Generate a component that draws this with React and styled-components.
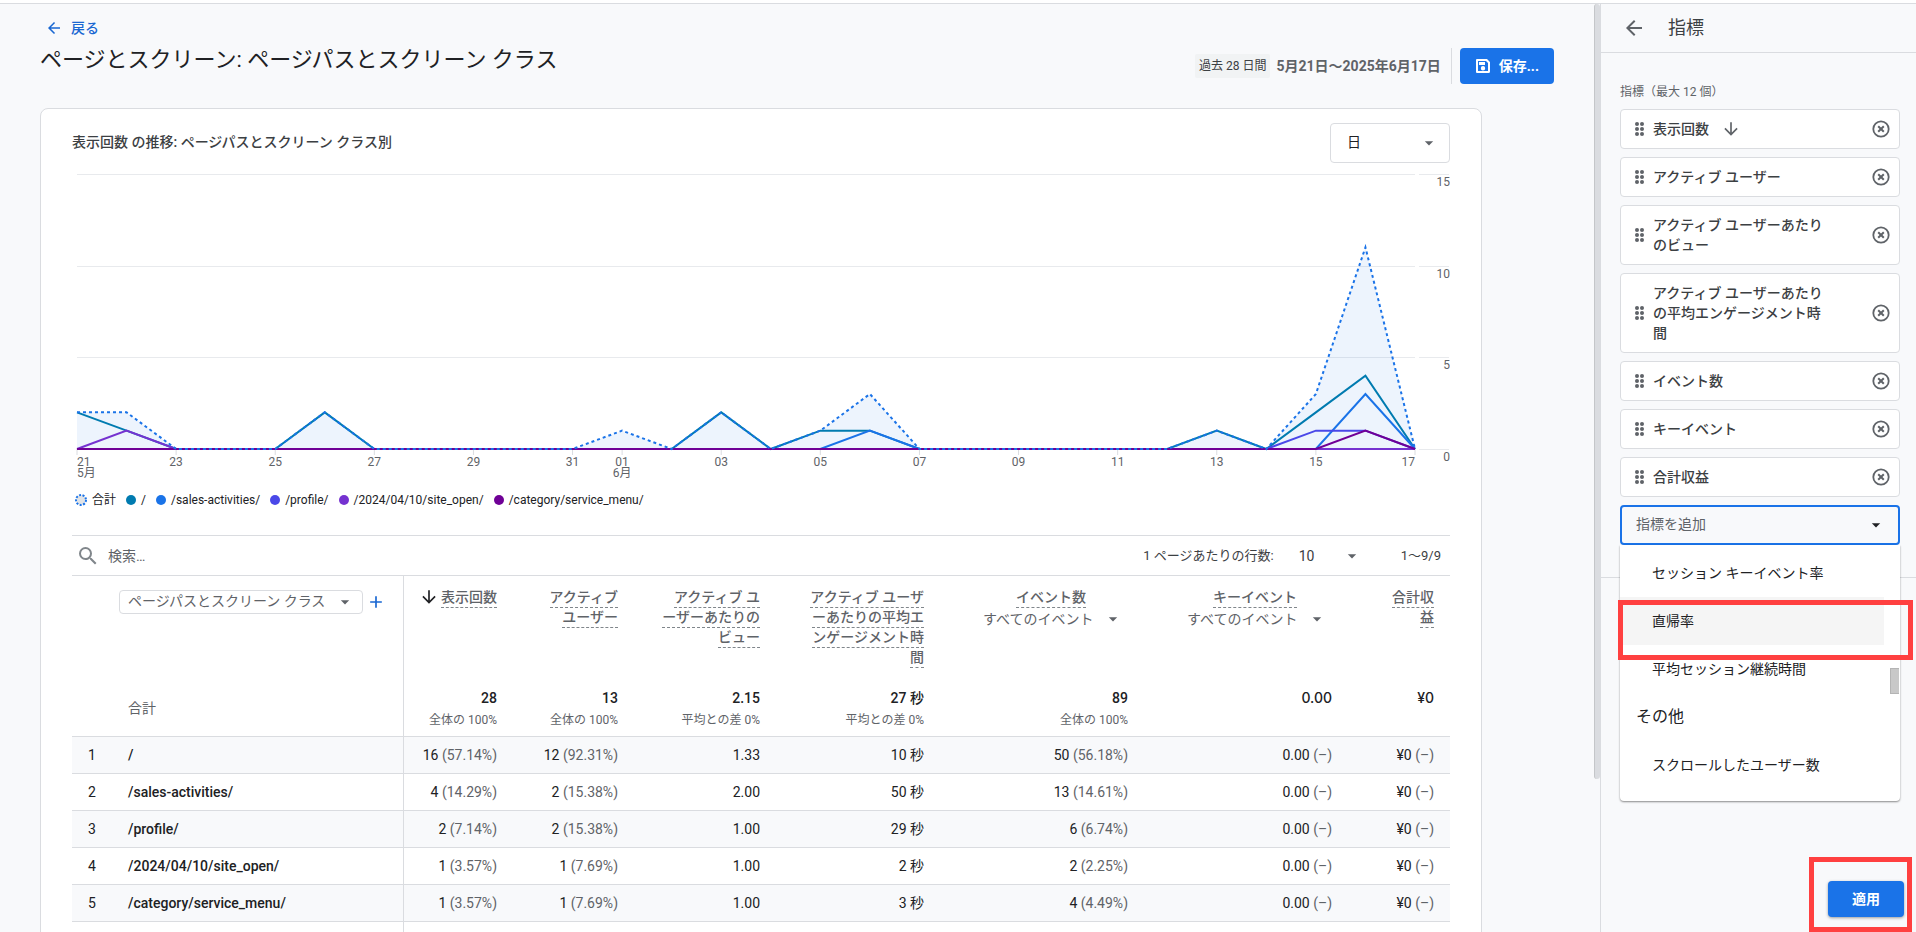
import styled, { createGlobalStyle } from 'styled-components';
import { useState } from 'react';
import { MdArrowBack, MdArrowDownward, MdAdd, MdSearch, MdArrowDropDown } from 'react-icons/md';

const GlobalStyle = createGlobalStyle`
  * {
    box-sizing: border-box;
  }

  body {
    margin: 0;
    color: #202124;
    background: #f8f9fb;
    font-family: Roboto, 'Noto Sans CJK JP', sans-serif;
    font-size: 14px;
    line-height: 20px;
  }

  button, input, select {
    font: inherit;
    color: inherit;
    margin: 0;
  }

  button {
    cursor: pointer;
  }
`;

const Shell = styled.div`
  height: 100vh;
  overflow: hidden;
  padding-top: 3px;
  background: #fff;
`;

const Page = styled.div`
  display: flex;
  height: 100%;
  border-top: 1px solid #dadce0;
  background: #f8f9fb;
`;

const Main = styled.main`
  flex: 1;
  min-width: 0;
  padding: 14px 40px 0;
  overflow: hidden;
`;

const ScrollTrack = styled.div`
  width: 6px;
  flex: none;
`;

const ScrollThumb = styled.div`
  height: 83.5%;
  border-radius: 4px;
  border-left: 1px solid #c4c6c9;
  background: #dadce0;
`;

const BackLink = styled.a`
  display: flex;
  align-items: center;
  gap: 8px;
  width: fit-content;
  margin-left: 5px;
  color: #1967d2;
  font-weight: 500;
  text-decoration: none;
`;

const HeaderRow = styled.header`
  display: flex;
  align-items: center;
  justify-content: space-between;
  height: 50px;
  margin-bottom: 20px;
`;

const PageTitle = styled.h1`
  margin: 0 0 6px;
  font-size: 22px;
  line-height: 28px;
  font-weight: 400;
`;

const HeaderActions = styled.div`
  display: flex;
  align-items: center;
  padding-top: 6px;
`;

const RangeChip = styled.span`
  padding: 2px 4px;
  margin-right: 6px;
  border-radius: 2px;
  background: #f1f3f4;
  color: #3c4043;
  font-size: 12px;
`;

const DateRange = styled.span`
  color: #5f6368;
  font-weight: 700;
`;

const Divider = styled.span`
  width: 1px;
  height: 36px;
  margin: 0 8px 0 10px;
  background: #dadce0;
`;

const PrimaryButton = styled.button`
  display: flex;
  align-items: center;
  justify-content: center;
  gap: 8px;
  height: 36px;
  min-width: 76px;
  padding: 0 15px;
  border: none;
  border-radius: 4px;
  background: #1a73e8;
  color: #fff;
  font-weight: 700;
  box-shadow: ${(p) => (p.$raised ? '0 1px 3px rgba(60, 64, 67, 0.5)' : 'none')};
`;

const Card = styled.section`
  margin-right: 72px;
  padding: 14px 31px 0;
  border: 1px solid #dadce0;
  border-radius: 8px 8px 0 0;
  background: #fff;
`;

const CardHeader = styled.div`
  display: flex;
  justify-content: space-between;
  height: 40px;
`;

const CardTitle = styled.h2`
  margin: 9px 0 0;
  color: #3c4043;
  font-size: 14px;
  line-height: 20px;
  font-weight: 500;
`;

const SelectWrap = styled.span`
  display: inline-flex;
  align-items: center;
  position: relative;

  svg {
    position: absolute;
    right: ${(p) => p.$caret}px;
    color: #5f6368;
    pointer-events: none;
  }
`;

const BareSelect = styled.select`
  appearance: none;
  border: none;
  background: transparent;
  outline: none;
  padding: 0;
  cursor: pointer;
`;

const PeriodSelect = styled(BareSelect)`
  width: 120px;
  height: 40px;
  padding: 0 16px 2px;
  border: 1px solid #dadce0;
  border-radius: 4px;
`;

const ChartSvg = styled.svg`
  display: block;
  width: 100%;
  height: auto;
  font-size: 12px;
`;

const Legend = styled.ul`
  display: flex;
  gap: 10px;
  margin: 5px 0 0;
  padding: 0 0 0 3px;
  list-style: none;
  font-size: 12px;
`;

const LegendItem = styled.li`
  display: flex;
  align-items: center;
  gap: 5px;
`;

const Toolbar = styled.div`
  display: flex;
  align-items: center;
  height: 41px;
  margin-top: 25px;
  padding: 0 9px 0 4px;
  border: solid #dadce0;
  border-width: 1px 0;
  color: #3c4043;
  font-size: 13px;
`;

const SearchInput = styled.input`
  flex: 1;
  margin-left: 8px;
  padding: 0;
  border: none;
  outline: none;
  background: transparent;
  font-size: 14px;

  &::placeholder {
    color: #5f6368;
    opacity: 1;
  }
`;

const RowsSelect = styled(BareSelect)`
  width: 63px;
  margin: 0 39px 0 25px;
  font-size: 14px;
`;

const Table = styled.table`
  width: 100%;
  border-collapse: collapse;
  table-layout: fixed;
`;

const HeadCell = styled.th`
  height: 112px;
  padding: 11px 16px 0 0;
  color: #5f6368;
  font-weight: 500;
  text-align: right;
  vertical-align: top;
`;

const DimensionHead = styled(HeadCell)`
  padding: 14px 0 0 47px;
  border-right: 1px solid #dadce0;
  text-align: left;
  font-weight: 400;
`;

const DimensionRow = styled.div`
  display: flex;
  align-items: center;
  gap: 3px;
`;

const DimensionSelect = styled(BareSelect)`
  width: 244px;
  height: 24px;
  padding: 0 8px 2px;
  border: 1px solid #dadce0;
  border-radius: 4px;
`;

const IconButton = styled.button`
  display: inline-flex;
  padding: 0;
  border: none;
  background: transparent;
  color: ${(p) => p.$color || '#5f6368'};
`;

const SortLabel = styled.span`
  display: inline-flex;
  align-items: center;
  gap: 2px;

  svg {
    color: #202124;
  }
`;

const Dashed = styled.span`
  padding-bottom: 2px;
  border-bottom: 1px dashed #80868b;
`;

const EventHead = styled.div`
  display: inline-flex;
  flex-direction: column;
  align-items: center;
  gap: 2px;
  margin-right: 5px;
`;

const EventSelect = styled(BareSelect)`
  width: 144px;
  padding-left: 4px;
  font-weight: 400;
`;

const TotalCell = styled.td`
  height: 48px;
  padding: 0 16px 0 0;
  border-bottom: 1px solid #dadce0;
  text-align: right;
  vertical-align: top;
`;

const TotalLabel = styled(TotalCell)`
  padding: 10px 0 0 56px;
  border-right: 1px solid #dadce0;
  color: #5f6368;
  text-align: left;
`;

const TotalValue = styled.div`
  font-family: ${(p) => (p.$wide ? 'Inter, ' : '')}Roboto, 'Noto Sans CJK JP', sans-serif;
  font-weight: 500;
`;

const TotalNote = styled.div`
  margin-top: 2px;
  color: #5f6368;
  font-size: 12px;
`;

const DataRow = styled.tr`
  height: 37px;
  background: ${(p) => (p.$shaded ? '#f8f9fb' : '#fff')};
`;

const Cell = styled.td`
  padding: 0 16px 0 0;
  border-bottom: 1px solid #dadce0;
  text-align: right;
  white-space: nowrap;
`;

const IndexCell = styled(Cell)`
  padding: 0 0 0 16px;
  text-align: left;
`;

const PathCell = styled(Cell)`
  padding: 0 0 0 8px;
  border-right: 1px solid #dadce0;
  font-weight: 500;
  text-align: left;
`;

const TailCell = styled(PathCell)`
  height: 40px;
  border-bottom: none;
`;

const Share = styled.span`
  color: #5f6368;
`;

const Sidebar = styled.aside`
  display: flex;
  flex-direction: column;
  flex: none;
  width: 316px;
  border-left: 1px solid #dadce0;
`;

const SidebarHeader = styled.div`
  display: flex;
  align-items: center;
  gap: 22px;
  height: 49px;
  padding-left: 21px;
  border-bottom: 1px solid #dadce0;
`;

const SidebarTitle = styled.h2`
  margin: 0;
  font-size: 18px;
  line-height: 24px;
  font-weight: 400;
  color: #3c4043;
`;

const MetricsSection = styled.div`
  padding: 29px 16px 32px 19px;
  border-bottom: 1px solid #dadce0;
`;

const SectionLabel = styled.div`
  margin-bottom: 7px;
  color: #5f6368;
  font-size: 12px;
`;

const MetricList = styled.ul`
  display: flex;
  flex-direction: column;
  gap: 8px;
  margin: 0 0 8px;
  padding: 0;
  list-style: none;
`;

const MetricItem = styled.li`
  display: flex;
  align-items: center;
  padding: 9px 8px 9px 12px;
  border: 1px solid #dadce0;
  border-radius: 4px;
  background: #fff;
  color: #3c4043;
  font-weight: 500;
`;

const MetricName = styled.span`
  display: flex;
  align-items: center;
  gap: 12px;
  max-width: 176px;
  margin: 0 auto 0 6px;

  svg {
    flex: none;
    color: #5f6368;
  }
`;

const AddMetric = styled.div`
  position: relative;
  display: flex;

  > svg {
    position: absolute;
    right: 14px;
    top: 10px;
    pointer-events: none;
  }
`;

const AddInput = styled.input`
  width: 100%;
  height: 40px;
  padding: 0 14px 2px;
  border: 2px solid #1a73e8;
  border-radius: 4px;
  background: #f8f9fb;
  outline: none;

  &::placeholder {
    color: #5f6368;
    opacity: 1;
  }
`;

const Menu = styled.div`
  position: absolute;
  top: 40px;
  left: 0;
  right: 0;
  display: flex;
  padding: 4px 1px 12px 0;
  border-radius: 0 0 4px 4px;
  background: #fff;
  box-shadow: 0 1px 2px rgba(0, 0, 0, 0.45);
`;

const MenuList = styled.ul`
  flex: 1;
  margin: 0 6px 0 0;
  padding: 0;
  list-style: none;
`;

const MenuItem = styled.li`
  display: flex;
  align-items: center;
  height: 48px;
  padding-left: ${(p) => (p.$group ? 16 : 32)}px;
  font-size: ${(p) => (p.$group ? 16 : 14)}px;
  background: ${(p) => (p.$active ? '#f5f5f5' : 'transparent')};
`;

const MenuThumb = styled.div`
  width: 9px;
  height: 26px;
  margin-top: 119px;
  border: 1px solid #b4b4b4;
  border-right: none;
  background: #c8c8c8;
`;

/* hand-drawn markers over the panel */
const Marker = styled.div`
  position: absolute;
  border: 5px solid #ff4040;
  pointer-events: none;
`;

const ItemMarker = styled(Marker)`
  top: 55px;
  left: -2px;
  right: -13px;
  height: 60px;
`;

const SidebarFooter = styled.div`
  position: relative;
  display: flex;
  justify-content: flex-end;
  margin-top: auto;
  padding: 24px 12px 15px;
`;

const ApplyMarker = styled(Marker)`
  top: 0;
  right: 4px;
  bottom: 0;
  width: 103px;
`;

const DAYS = 28;
const STEP = 1338 / (DAYS - 1);
const LEFT = 5;
const BASE = 286;
const UNIT = 275 / 15;

function series(points) {
  return Array.from({ length: DAYS }, (_, day) => points[day] || 0);
}

const total = series({ 0: 2, 1: 2, 5: 2, 11: 1, 13: 2, 15: 1, 16: 3, 23: 1, 25: 3, 26: 11 });

const lines = [
  { name: '/', color: '#007bb0', data: series({ 0: 2, 1: 1, 5: 2, 13: 2, 15: 1, 16: 1, 23: 1, 25: 2, 26: 4 }) },
  { name: '/sales-activities/', color: '#1a73e8', data: series({ 16: 1, 26: 3 }) },
  { name: '/profile/', color: '#4a48e8', data: series({ 25: 1, 26: 1 }) },
  { name: '/2024/04/10/site_open/', color: '#7532d0', data: series({ 1: 1 }) },
  { name: '/category/service_menu/', color: '#6f0096', data: series({ 26: 1 }) },
];

const ticks = [
  { day: 0, label: '21', month: '5月', anchor: 'start' },
  { day: 2, label: '23' },
  { day: 4, label: '25' },
  { day: 6, label: '27' },
  { day: 8, label: '29' },
  { day: 10, label: '31' },
  { day: 11, label: '01', month: '6月' },
  { day: 13, label: '03' },
  { day: 15, label: '05' },
  { day: 17, label: '07' },
  { day: 19, label: '09' },
  { day: 21, label: '11' },
  { day: 23, label: '13' },
  { day: 25, label: '15' },
  { day: 27, label: '17', anchor: 'end' },
];

const x = (day) => LEFT + day * STEP;
const y = (value) => BASE - value * UNIT;
const toPoints = (data) => data.map((v, day) => `${x(day)},${y(v)}`).join(' ');

function TrendChart() {
  return (
    <ChartSvg viewBox="0 0 1378 322" role="img" aria-label="表示回数の推移">
      {[0, 5, 10, 15].map((v) => (
        <g key={v}>
          <path d={`M5 ${Math.round(y(v)) + 0.5}H1343M1347 ${Math.round(y(v)) + 0.5}H1377`} stroke="#e8eaed" />
          <text x="1378" y={Math.round(y(v)) + 12} textAnchor="end" fill="#5f6368">{v}</text>
        </g>
      ))}
      <polygon points={`${x(0)},${BASE} ${toPoints(total)} ${x(27)},${BASE}`} fill="#1a73e8" fillOpacity="0.08" />
      {ticks.map((t) => (
        <g key={t.day} textAnchor={t.anchor || 'middle'} fill="#5f6368">
          <path d={`M${x(t.day)} ${BASE}v6`} stroke="#dadce0" />
          <text x={x(t.day)} y="303">{t.label}</text>
          {t.month && <text x={x(t.day)} y="314">{t.month}</text>}
        </g>
      ))}
      {lines.map((line) => (
        <polyline key={line.name} points={toPoints(line.data)} fill="none" stroke={line.color} strokeWidth="2" />
      ))}
      <polyline points={toPoints(total)} fill="none" stroke="#1a73e8" strokeWidth="2" strokeDasharray="3 3" />
    </ChartSvg>
  );
}

function SaveIcon() {
  return (
    <svg width="16" height="16" viewBox="0 0 16 16" aria-hidden="true">
      <path fill="#fff" fillRule="evenodd" d="M2 1h10l3 3v9.500a1.500 1.500 0 0 1-1.500 1.500h-11.500a1 1 0 0 1-1-1v-12a1 1 0 0 1 1-1zM3 3v10h10V5l-2-2zM4 4h6v3H4zM8 8a2.200 2.200 0 1 1 0 4.400a2.200 2.200 0 0 1 0-4.400z" />
    </svg>
  );
}

function DragIcon() {
  return (
    <svg width="14" height="16" viewBox="0 0 14 16" fill="#5f6368" aria-hidden="true">
      {[3, 8, 13].map((cy) => (
        <g key={cy}>
          <circle cx="4" cy={cy} r="2" />
          <circle cx="9" cy={cy} r="2" />
        </g>
      ))}
    </svg>
  );
}

function RemoveIcon() {
  return (
    <svg width="20" height="20" viewBox="0 0 20 20" fill="none" stroke="#5f6368" aria-hidden="true">
      <circle cx="10" cy="10" r="7.700" strokeWidth="1.800" />
      <path d="M7.200 7.200l5.600 5.600M12.800 7.200l-5.600 5.600" strokeWidth="2" />
    </svg>
  );
}

const metrics = [
  '表示回数',
  'アクティブ ユーザー',
  'アクティブ ユーザーあたりのビュー',
  'アクティブ ユーザーあたりの平均エンゲージメント時間',
  'イベント数',
  'キーイベント',
  '合計収益',
];

const totals = [
  { value: '28', note: '全体の 100%' },
  { value: '13', note: '全体の 100%' },
  { value: '2.15', note: '平均との差 0%' },
  { value: '27 秒', note: '平均との差 0%' },
  { value: '89', note: '全体の 100%' },
  { value: '0.00', wide: true },
  { value: '¥0', wide: true },
];

const rows = [
  ['/', ['16', '57.14%'], ['12', '92.31%'], ['1.33'], ['10 秒'], ['50', '56.18%'], ['0.00', '–'], ['¥0', '–']],
  ['/sales-activities/', ['4', '14.29%'], ['2', '15.38%'], ['2.00'], ['50 秒'], ['13', '14.61%'], ['0.00', '–'], ['¥0', '–']],
  ['/profile/', ['2', '7.14%'], ['2', '15.38%'], ['1.00'], ['29 秒'], ['6', '6.74%'], ['0.00', '–'], ['¥0', '–']],
  ['/2024/04/10/site_open/', ['1', '3.57%'], ['1', '7.69%'], ['1.00'], ['2 秒'], ['2', '2.25%'], ['0.00', '–'], ['¥0', '–']],
  ['/category/service_menu/', ['1', '3.57%'], ['1', '7.69%'], ['1.00'], ['3 秒'], ['4', '4.49%'], ['0.00', '–'], ['¥0', '–']],
];

function EventColumnHead({ label }) {
  return (
    <EventHead>
      <span><Dashed>{label}</Dashed></span>
      <SelectWrap $caret={0}>
        <EventSelect aria-label={`${label}の絞り込み`}>
          <option>すべてのイベント</option>
        </EventSelect>
        <MdArrowDropDown size={20} />
      </SelectWrap>
    </EventHead>
  );
}

function ReportTable() {
  return (
    <Table>
      <colgroup>
        <col style={{ width: 48 }} />
        <col />
        {[110, 121, 142, 164, 204, 204, 102].map((width, i) => (
          <col key={i} style={{ width }} />
        ))}
      </colgroup>
      <thead>
        <tr>
          <DimensionHead colSpan={2} scope="col">
            <DimensionRow>
              <SelectWrap $caret={8}>
                <DimensionSelect aria-label="ディメンション">
                  <option>ページパスとスクリーン クラス</option>
                </DimensionSelect>
                <MdArrowDropDown size={20} />
              </SelectWrap>
              <IconButton $color="#1967d2" aria-label="追加"><MdAdd size={20} /></IconButton>
            </DimensionRow>
          </DimensionHead>
          <HeadCell scope="col">
            <SortLabel>
              <MdArrowDownward size={20} />
              <span><Dashed>表示回数</Dashed></span>
            </SortLabel>
          </HeadCell>
          <HeadCell scope="col"><Dashed>アクティブ<br />ユーザー</Dashed></HeadCell>
          <HeadCell scope="col"><Dashed>アクティブ ユ<br />ーザーあたりの<br />ビュー</Dashed></HeadCell>
          <HeadCell scope="col"><Dashed>アクティブ ユーザ<br />ーあたりの平均エ<br />ンゲージメント時<br />間</Dashed></HeadCell>
          <HeadCell scope="col"><EventColumnHead label="イベント数" /></HeadCell>
          <HeadCell scope="col"><EventColumnHead label="キーイベント" /></HeadCell>
          <HeadCell scope="col"><Dashed>合計収<br />益</Dashed></HeadCell>
        </tr>
      </thead>
      <tbody>
        <tr>
          <TotalLabel colSpan={2}>合計</TotalLabel>
          {totals.map((t, i) => (
            <TotalCell key={i}>
              <TotalValue $wide={t.wide}>{t.value}</TotalValue>
              {t.note && <TotalNote>{t.note}</TotalNote>}
            </TotalCell>
          ))}
        </tr>
        {rows.map(([path, ...values], i) => (
          <DataRow key={path} $shaded={i % 2 === 0}>
            <IndexCell>{i + 1}</IndexCell>
            <PathCell>{path}</PathCell>
            {values.map(([value, share], j) => (
              <Cell key={j}>{value}{share && <Share> ({share})</Share>}</Cell>
            ))}
          </DataRow>
        ))}
        <tr>
          <TailCell colSpan={2} />
          <td colSpan={7} />
        </tr>
      </tbody>
    </Table>
  );
}

function MetricsPanel() {
  const [query, setQuery] = useState('');

  return (
    <Sidebar>
      <SidebarHeader>
        <IconButton aria-label="戻る"><MdArrowBack size={24} /></IconButton>
        <SidebarTitle>指標</SidebarTitle>
      </SidebarHeader>
      <MetricsSection>
        <SectionLabel>指標（最大 12 個）</SectionLabel>
        <MetricList>
          {metrics.map((name, i) => (
            <MetricItem key={name}>
              <DragIcon />
              <MetricName>
                {name}
                {i === 0 && <MdArrowDownward size={20} />}
              </MetricName>
              <IconButton aria-label={`${name}を削除`}><RemoveIcon /></IconButton>
            </MetricItem>
          ))}
        </MetricList>
        <AddMetric>
          <AddInput
            type="text"
            aria-label="指標を追加"
            placeholder="指標を追加"
            value={query}
            onChange={(e) => setQuery(e.target.value)}
          />
          <MdArrowDropDown size={20} />
          <Menu>
            <MenuList>
              <MenuItem>セッション キーイベント率</MenuItem>
              <MenuItem $active>直帰率</MenuItem>
              <MenuItem>平均セッション継続時間</MenuItem>
              <MenuItem $group>その他</MenuItem>
              <MenuItem>スクロールしたユーザー数</MenuItem>
            </MenuList>
            <MenuThumb />
            <ItemMarker />
          </Menu>
        </AddMetric>
      </MetricsSection>
      <SidebarFooter>
        <PrimaryButton $raised>適用</PrimaryButton>
        <ApplyMarker />
      </SidebarFooter>
    </Sidebar>
  );
}

function App() {
  return (
    <Shell>
      <GlobalStyle />
      <Page>
        <Main>
          <BackLink href="#"><MdArrowBack size={18} />戻る</BackLink>
          <HeaderRow>
            <PageTitle>ページとスクリーン: ページパスとスクリーン クラス</PageTitle>
            <HeaderActions>
              <RangeChip>過去 28 日間</RangeChip>
              <DateRange>5月21日〜2025年6月17日</DateRange>
              <Divider />
              <PrimaryButton><SaveIcon />保存...</PrimaryButton>
            </HeaderActions>
          </HeaderRow>
          <Card>
            <CardHeader>
              <CardTitle>表示回数 の推移: ページパスとスクリーン クラス別</CardTitle>
              <SelectWrap $caret={11}>
                <PeriodSelect aria-label="期間の単位">
                  <option>日</option>
                </PeriodSelect>
                <MdArrowDropDown size={20} />
              </SelectWrap>
            </CardHeader>
            <TrendChart />
            <Legend>
              <LegendItem>
                <svg width="12" height="12" viewBox="0 0 12 12" aria-hidden="true">
                  <circle cx="6" cy="6" r="5" fill="#e0e3e7" stroke="#1a73e8" strokeWidth="2" strokeDasharray="2 1.500" />
                </svg>
                合計
              </LegendItem>
              {lines.map((line) => (
                <LegendItem key={line.name}>
                  <svg width="10" height="10" viewBox="0 0 10 10" aria-hidden="true">
                    <circle cx="5" cy="5" r="5" fill={line.color} />
                  </svg>
                  {line.name}
                </LegendItem>
              ))}
            </Legend>
            <Toolbar>
              <MdSearch size={24} color="#80868b" />
              <SearchInput type="search" aria-label="検索" placeholder="検索…" />
              <label htmlFor="rows-per-page">1 ページあたりの行数:</label>
              <SelectWrap $caret={39}>
                <RowsSelect id="rows-per-page">
                  <option>10</option>
                </RowsSelect>
                <MdArrowDropDown size={20} />
              </SelectWrap>
              <span>1〜9/9</span>
            </Toolbar>
            <ReportTable />
          </Card>
        </Main>
        <ScrollTrack>
          <ScrollThumb />
        </ScrollTrack>
        <MetricsPanel />
      </Page>
    </Shell>
  );
}

export default App;
